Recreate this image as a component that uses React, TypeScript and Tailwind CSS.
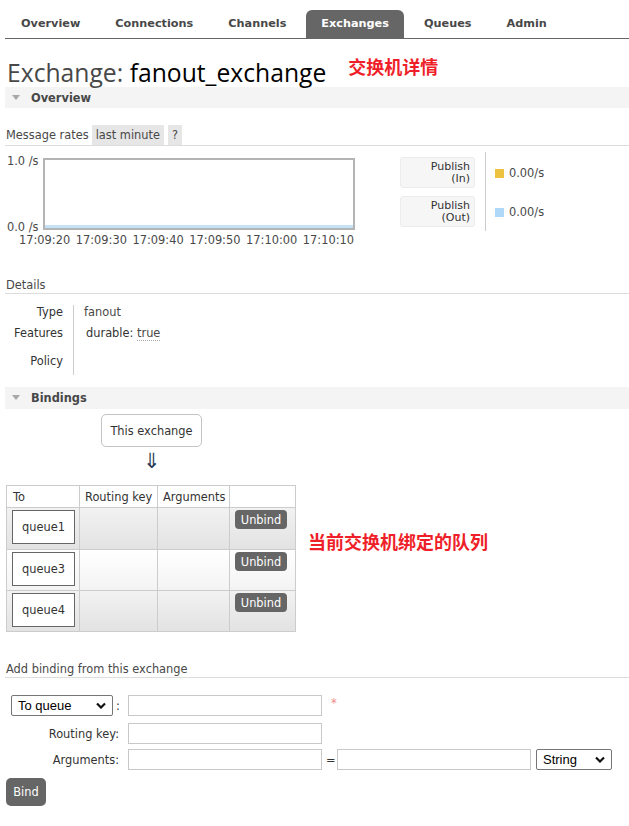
import React from "react";

const Tri = () => (
  <svg width="8" height="6" viewBox="0 0 8 6" className="shrink-0">
    <polygon points="0,0 8,0 4,5" fill="#a8a8a8" />
  </svg>
);

const Chevron = () => (
  <svg width="10" height="7" viewBox="0 0 10 7">
    <polyline points="1,1.5 5,5.5 9,1.5" fill="none" stroke="#111" strokeWidth="2.2" />
  </svg>
);

function FakeSelect({ label, w }: { label: string; w: string }) {
  return (
    <div
      className={`${w} h-[21px] border border-[#767676] rounded-[2px] bg-white flex items-center justify-between pl-[6px] pr-[6px] font-['Liberation_Sans',sans-serif] text-[13px] text-black`}
    >
      <span>{label}</span>
      <Chevron />
    </div>
  );
}

const Input = ({ w = "w-[194px]" }: { w?: string }) => (
  <div className={`${w} h-[21px] border border-[#c8c8c8] bg-white`} />
);

const rows = [
  { q: "queue1", alt: true },
  { q: "queue3", alt: false },
  { q: "queue4", alt: true },
];

export default function App() {
  const times = ["17:09:20", "17:09:30", "17:09:40", "17:09:50", "17:10:00", "17:10:10"];
  return (
    <div className="w-[629px] min-h-[826px] bg-white font-['DejaVu_Sans',sans-serif] text-[11.4px] leading-[14px] text-[#484848]">
      <div className="pl-[5px] pt-[10px]">
        {/* nav */}
        <ul className="flex gap-[5px] pl-[1px] border-b border-[#666] text-[11.25px]">
          {["Overview", "Connections", "Channels", "Exchanges", "Queues", "Admin"].map((t) => (
            <li
              key={t}
              className={`h-[28px] px-[15px] leading-[28px] font-bold rounded-t-[6px] ${
                t === "Exchanges" ? "bg-[#666] text-white" : "text-[#484848]"
              }`}
            >
              {t}
            </li>
          ))}
        </ul>

        {/* title */}
        <div className="flex items-start">
          <h1 className="mt-[19px] ml-[2px] text-[24.7px] leading-[29px] font-['Open_Sans',sans-serif] text-[#484848] whitespace-nowrap">
            Exchange: <span className="text-black">fanout_exchange</span>
          </h1>
          <span className="mt-[16px] ml-[22px] text-[18px] leading-[22px] font-bold text-[#ef1f2a] font-['Noto_Sans_CJK_SC',sans-serif]">
            交换机详情
          </span>
        </div>

        {/* overview header */}
        <div className="h-[21px] bg-[#f4f4f4] flex items-center">
          <div className="ml-[7px]">
            <Tri />
          </div>
          <span className="ml-[11px] font-bold">Overview</span>
        </div>

        {/* message rates */}
        <div className="mt-[17px] flex items-center h-[21px] border-b border-[#dddddd]">
          <span className="ml-[1px]">Message rates</span>
          <span className="ml-[3px] h-[20px] px-[4px] bg-[#e6e6e6] flex items-center">last minute</span>
          <span className="ml-[4px] h-[20px] px-[4px] bg-[#e6e6e6] flex items-center">?</span>
        </div>

        {/* chart row */}
        <div className="mt-[6px] flex items-start">
          <div className="flex flex-col">
            <div className="flex items-start">
              <div className="ml-[2px] mt-[2px] h-[80px] flex flex-col justify-between w-[36px]">
                <span>1.0 /s</span>
                <span>0.0 /s</span>
              </div>
              <div className="mt-[6px] w-[312px] h-[72px] border-2 border-[#b4b4b4] bg-white flex flex-col justify-end">
                <div className="h-[3px] bg-[#c5e1f6]" />
              </div>
            </div>
            <div className="-mt-[1px] ml-[14px] w-[335px] flex justify-between">
              {times.map((t) => (
                <span key={t}>{t}</span>
              ))}
            </div>
          </div>
          <div className="ml-[45px] mt-[5px] flex flex-col gap-[8px]">
            {[
              ["Publish", "(In)"],
              ["Publish", "(Out)"],
            ].map(([a, b]) => (
              <div
                key={b}
                className="w-[75px] h-[31px] bg-[#f6f6f6] border border-[#ececec] rounded-[3px] flex flex-col items-end justify-center pr-[4px] text-[11px] leading-[12px] text-[#333]"
              >
                <span>{a}</span>
                <span>{b}</span>
              </div>
            ))}
          </div>
          <div className="ml-[10px] h-[79px] border-l border-[#cccccc] pl-[9px] flex flex-col">
            <div className="mt-[14px] flex items-center gap-[5px]">
              <span className="w-[9px] h-[9px] bg-[#edc240]" />
              <span>0.00/s</span>
            </div>
            <div className="mt-[25px] flex items-center gap-[5px]">
              <span className="w-[9px] h-[9px] bg-[#afd8f8]" />
              <span>0.00/s</span>
            </div>
          </div>
        </div>

        {/* details */}
        <div className="mt-[31px] border-b border-[#dddddd] pl-[1px] pb-[1px]">Details</div>
        <div className="mt-[11px] grid grid-cols-[69px_1fr]">
          <div className="h-[21px] text-right pr-[10px] border-r border-[#cccccc] text-[#333]">Type</div>
          <div className="h-[21px] pl-[10px]">fanout</div>
          <div className="h-[28px] text-right pr-[10px] border-r border-[#cccccc] text-[#333]">Features</div>
          <div className="h-[28px] pl-[12px]">
            <span className="text-[#333]">durable:</span>{" "}
            <span className="border-b border-dotted border-[#aaa]">true</span>
          </div>
          <div className="h-[21px] text-right pr-[10px] border-r border-[#cccccc] text-[#333]">Policy</div>
          <div className="h-[21px]" />
        </div>

        {/* bindings header */}
        <div className="mt-[12px] h-[22px] bg-[#f4f4f4] flex items-center">
          <div className="ml-[7px]">
            <Tri />
          </div>
          <span className="ml-[11px] font-bold">Bindings</span>
        </div>

        <div className="mt-[5px] ml-[96px] w-[101px] h-[33px] border border-[#c4c4c4] rounded-[5px] flex items-center justify-center text-[#333]">
          This exchange
        </div>
        <div className="ml-[96px] w-[101px] mt-[1px] text-center text-[21px] leading-[26px] text-[#2a3a55]">⇓</div>

        {/* bindings table + note */}
        <div className="mt-[11px] flex items-start">
          <table className="ml-[1px] border-collapse border border-[#cccccc] text-[#333]">
            <thead>
              <tr className="h-[22px] bg-white">
                <th className="w-[73px] border border-[#cccccc] text-left font-normal pl-[6px]">To</th>
                <th className="w-[78px] border border-[#cccccc] text-left font-normal pl-[5px]">Routing key</th>
                <th className="w-[72px] border border-[#cccccc] text-left font-normal pl-[5px]">Arguments</th>
                <th className="w-[66px] border border-[#cccccc]" />
              </tr>
            </thead>
            <tbody>
              {rows.map((r, i) => (
                <tr
                  key={r.q}
                  className={`${i === 0 ? "h-[42px]" : "h-[41px]"} ${
                    r.alt ? "bg-linear-to-b from-[#f2f2f2] to-[#e2e2e2]" : "bg-linear-to-b from-[#ffffff] to-[#f3f3f3]"
                  }`}
                >
                  <td className="border border-[#cccccc] align-top pt-[2px] pl-[5px]">
                    <div className="w-[63px] h-[34px] border border-[#666] bg-white flex items-center justify-center">
                      {r.q}
                    </div>
                  </td>
                  <td className="border border-[#cccccc]" />
                  <td className="border border-[#cccccc]" />
                  <td className="border border-[#cccccc] align-top pt-[2px] pl-[5px]">
                    <div className="w-[52px] h-[19px] rounded-[4px] bg-[#666] text-white flex items-center justify-center">
                      Unbind
                    </div>
                  </td>
                </tr>
              ))}
            </tbody>
          </table>
          <span className="ml-[12px] mt-[45px] text-[18px] leading-[22px] font-bold text-[#ef1f2a] font-['Noto_Sans_CJK_SC',sans-serif] whitespace-nowrap">
            当前交换机绑定的队列
          </span>
        </div>

        {/* add binding */}
        <div className="mt-[30px] border-b border-[#dddddd] pl-[1px] pb-[1px]">Add binding from this exchange</div>

        <div className="mt-[17px] flex flex-col text-[#333]">
          <div className="flex items-center">
            <div className="w-[114px] flex items-center">
              <div className="ml-[6px]">
                <FakeSelect label="To queue" w="w-[102px]" />
              </div>
              <span className="ml-[3px]">:</span>
            </div>
            <div className="ml-[9px]">
              <Input />
            </div>
            <span className="ml-[9px] -mt-[6px] text-[#f08a8a]">*</span>
          </div>
          <div className="mt-[7px] flex items-center">
            <div className="w-[114px] text-right">Routing key:</div>
            <div className="ml-[9px]">
              <Input />
            </div>
          </div>
          <div className="mt-[5px] flex items-center">
            <div className="w-[114px] text-right">Arguments:</div>
            <div className="ml-[9px]">
              <Input />
            </div>
            <span className="ml-[4px] w-[11px]">=</span>
            <Input />
            <div className="ml-[5px]">
              <FakeSelect label="String" w="w-[76px]" />
            </div>
          </div>
          <div className="mt-[8px] ml-[1px] w-[40px] h-[28px] rounded-[5px] bg-[#666] text-white flex items-center justify-center">
            Bind
          </div>
        </div>
      </div>
    </div>
  );
}
